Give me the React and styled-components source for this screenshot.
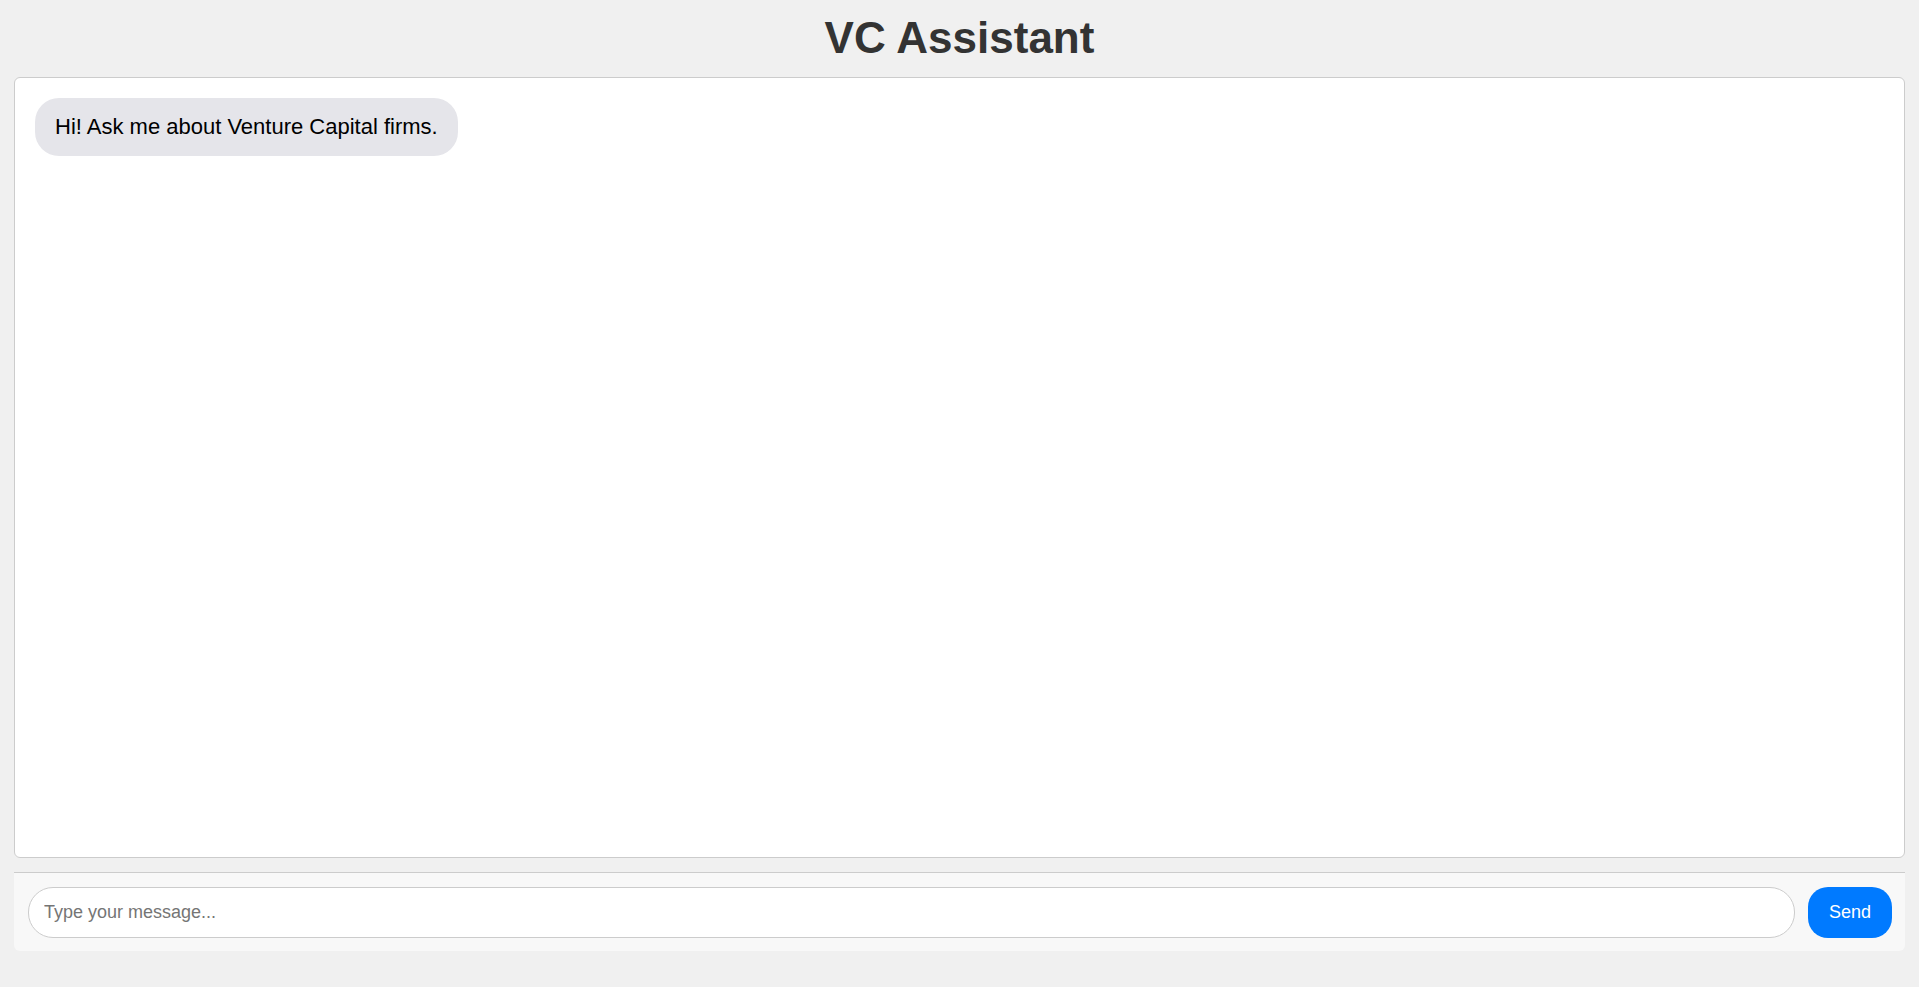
import React, { useState } from "react";
import styled, { createGlobalStyle } from "styled-components";

const GlobalStyle = createGlobalStyle`
  * { box-sizing: border-box; }
  html, body { margin: 0; padding: 0; }
  body {
    background: #f0f0f0;
    font-family: "Liberation Sans", Arial, Helvetica, sans-serif;
  }
`;

const Page = styled.div`
  height: 100vh;
  display: flex;
  flex-direction: column;
  padding: 13px 14px 36px;
`;

const Title = styled.h1`
  margin: 0 0 14px;
  text-align: center;
  font-size: 44px;
  line-height: 50px;
  font-weight: 700;
  color: #333;
`;

const ChatWindow = styled.div`
  flex: 1;
  min-height: 0;
  background: #fff;
  border: 1px solid #ccc;
  border-radius: 6px;
  padding: 20px;
  display: flex;
  flex-direction: column;
  align-items: flex-start;
  gap: 12px;
  overflow-y: auto;
`;

const Bubble = styled.div`
  align-self: ${(p) => (p.$fromUser ? "flex-end" : "flex-start")};
  background: ${(p) => (p.$fromUser ? "#007aff" : "#e5e5ea")};
  color: ${(p) => (p.$fromUser ? "#fff" : "#000")};
  font-size: 22px;
  padding: 16px 20px;
  border-radius: 24px;
  max-width: 70%;
`;

const InputBar = styled.form`
  margin-top: 14px;
  display: flex;
  align-items: center;
  gap: 13px;
  padding: 14px 13px 13px 14px;
  background: #f8f8f8;
  border-top: 1px solid #ccc;
  border-radius: 0 0 6px 6px;
`;

const TextInput = styled.input`
  flex: 1;
  font-family: inherit;
  font-size: 18px;
  padding: 14px 15px;
  height: 51px;
  border: 1px solid #ccc;
  border-radius: 25px;
  background: #fff;
  color: #000;
  outline: none;
  &::placeholder { color: #757575; }
`;

const SendButton = styled.button`
  font-family: inherit;
  font-size: 18px;
  height: 51px;
  padding: 0 21px;
  border: none;
  border-radius: 20px;
  background: #007aff;
  color: #fff;
  cursor: pointer;
`;

export default function App() {
  const [messages, setMessages] = useState([
    { fromUser: false, text: "Hi! Ask me about Venture Capital firms." },
  ]);
  const [value, setValue] = useState("");

  const onSubmit = (e) => {
    e.preventDefault();
    if (!value.trim()) return;
    setMessages((m) => [...m, { fromUser: true, text: value }]);
    setValue("");
  };

  return (
    <>
      <GlobalStyle />
      <Page>
        <Title>VC Assistant</Title>
        <ChatWindow>
          {messages.map((m, i) => (
            <Bubble key={i} $fromUser={m.fromUser}>
              {m.text}
            </Bubble>
          ))}
        </ChatWindow>
        <InputBar onSubmit={onSubmit}>
          <TextInput
            placeholder="Type your message..."
            value={value}
            onChange={(e) => setValue(e.target.value)}
          />
          <SendButton type="submit">Send</SendButton>
        </InputBar>
      </Page>
    </>
  );
}
